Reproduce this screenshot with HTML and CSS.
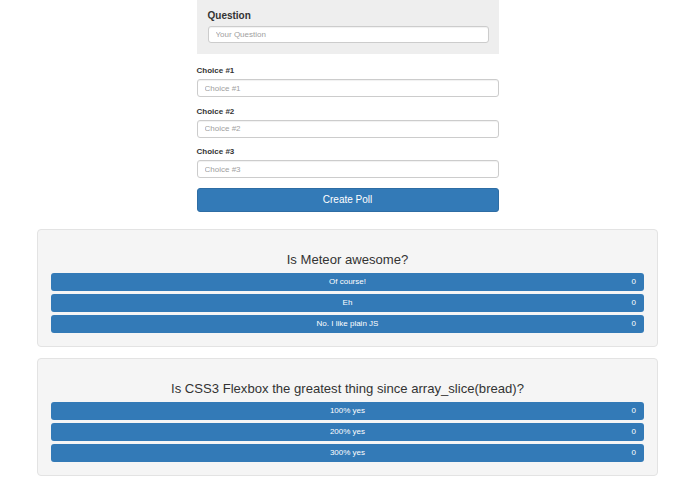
FILE: index.html
```html
<!DOCTYPE html>
<html>
<head>
<meta charset="utf-8">
<link rel="stylesheet" href="styles.css">
</head>
<body>
<div class="page">
  <form class="poll-form">
    <div class="question-panel">
      <label class="question-label">Question</label>
      <input class="field question-field" type="text" placeholder="Your Question">
    </div>
    <div class="group">
      <label class="choice-label">Choice #1</label>
      <input class="field" type="text" placeholder="Choice #1">
    </div>
    <div class="group">
      <label class="choice-label">Choice #2</label>
      <input class="field" type="text" placeholder="Choice #2">
    </div>
    <div class="group">
      <label class="choice-label">Choice #3</label>
      <input class="field" type="text" placeholder="Choice #3">
    </div>
    <button class="create-btn" type="button">Create Poll</button>
  </form>

  <div class="poll">
    <h3 class="poll-title">Is Meteor awesome?</h3>
    <div class="bars">
      <div class="bar"><span class="bar-text">Of course!</span><span class="bar-count">0</span></div>
      <div class="bar"><span class="bar-text">Eh</span><span class="bar-count">0</span></div>
      <div class="bar"><span class="bar-text">No. I like plain JS</span><span class="bar-count">0</span></div>
    </div>
  </div>

  <div class="poll">
    <h3 class="poll-title">Is CSS3 Flexbox the greatest thing since array_slice(bread)?</h3>
    <div class="bars">
      <div class="bar"><span class="bar-text">100% yes</span><span class="bar-count">0</span></div>
      <div class="bar"><span class="bar-text">200% yes</span><span class="bar-count">0</span></div>
      <div class="bar"><span class="bar-text">300% yes</span><span class="bar-count">0</span></div>
    </div>
  </div>
</div>
</body>
</html>
```

FILE: styles.css
```css
html, body {
  margin: 0;
  padding: 0;
  background: #ffffff;
}

body {
  font-family: "Liberation Sans", Arial, sans-serif;
  color: #333333;
}

.page {
  width: 695px;
}

.poll-form {
  width: 302px;
  margin: 0 auto;
  display: flex;
  flex-direction: column;
}

.question-panel {
  background: #eeeeee;
  padding: 10px 10px 11px 11px;
  display: flex;
  flex-direction: column;
  margin-bottom: 12px;
}

.question-label {
  font-size: 10px;
  font-weight: bold;
  line-height: 12px;
  margin-bottom: 4px;
}

.field {
  box-sizing: border-box;
  height: 18px;
  width: 100%;
  margin: 0;
  border: 1px solid #cccccc;
  border-radius: 3px;
  background: #ffffff;
  padding: 0 7px;
  font-family: "Liberation Sans", Arial, sans-serif;
  font-size: 8px;
  color: #555555;
  box-shadow: inset 0 1px 1px rgba(0, 0, 0, 0.06);
}

.field::placeholder {
  color: #a0a0a0;
}

.question-field {
  height: 17px;
}

.group {
  display: flex;
  flex-direction: column;
  margin-bottom: 9.5px;
}

.choice-label {
  font-size: 8px;
  font-weight: bold;
  line-height: 10px;
  margin-bottom: 3px;
}

.create-btn {
  height: 24px;
  border: 1px solid #2e6da4;
  border-radius: 3px;
  background: #337ab7;
  color: #ffffff;
  font-family: "Liberation Sans", Arial, sans-serif;
  font-size: 10px;
  padding: 0;
  margin-bottom: 17px;
}

.poll {
  box-sizing: border-box;
  width: 621px;
  margin: 0 auto 11px;
  background: #f5f5f5;
  border: 1px solid #e3e3e3;
  border-radius: 4px;
  padding: 22px 13px 13px 13px;
}

.poll-title {
  margin: 0 0 5px;
  font-size: 13.1px;
  font-weight: normal;
  line-height: 16px;
  text-align: center;
  color: #333333;
}

.bars {
  display: flex;
  flex-direction: column;
  gap: 3px;
}

.bar {
  height: 18px;
  background: #337ab7;
  border-radius: 3px;
  color: #ffffff;
  font-size: 8px;
  display: flex;
  align-items: center;
  position: relative;
}

.bar-text {
  flex: 1;
  text-align: center;
}

.bar-count {
  position: absolute;
  right: 8px;
}
```
